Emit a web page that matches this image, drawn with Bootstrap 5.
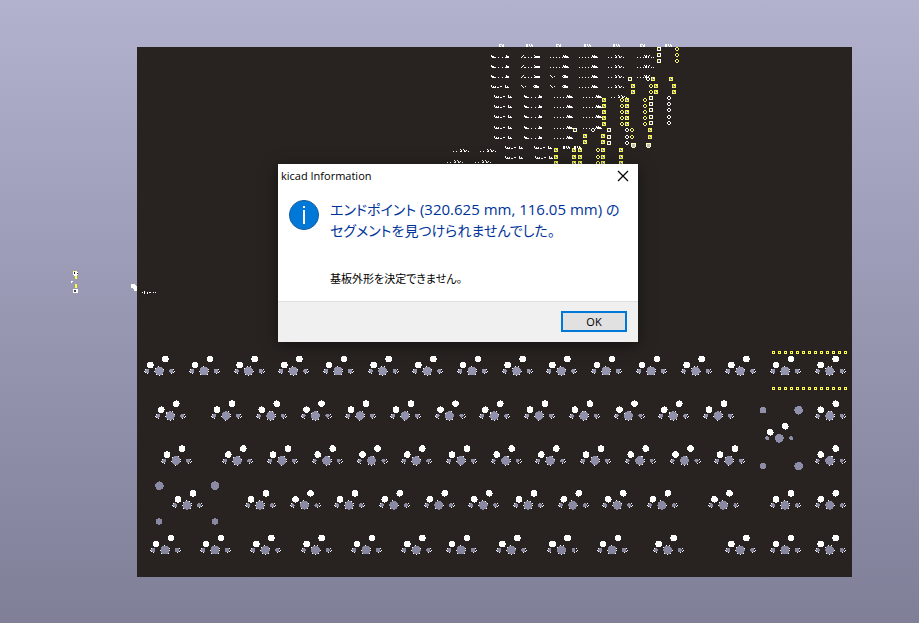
<!DOCTYPE html>
<html lang="ja">
<head>
<meta charset="utf-8">
<meta name="viewport" content="width=device-width, initial-scale=1">
<title>kicad Information</title>
<link href="https://cdn.jsdelivr.net/npm/bootstrap@5.3.0/dist/css/bootstrap.min.css" rel="stylesheet">
<style>
body { font-family: "Open Sans", "Noto Sans CJK JP", sans-serif; font-feature-settings: "palt"; }
.viewer { background: linear-gradient(#b2b1ce, #807f98); }
.info-window { left: 278px; top: 164px; width: 360px; font-size: 11px; line-height: 16px; box-shadow: 0 3px 14px rgba(0,0,0,.5); }
.title-row { height: 24px; padding-left: 3px; padding-right: 9px; }
.close-x { width: 12px; height: 12px; }
.message { padding: 11px 10px 14px; gap: 10px; }
.headline { font-size: 15px; line-height: 21px; color: #003399; }
.headline-kana { font-size: 14px; }
.detail { margin-top: 30px; }
.footer-row { background: #f0f0f0; border-color: #dfdfdf !important; padding: 9px 11px 10px; }
.ok-btn { width: 66px; height: 21px; background: #e1e1e1; border: 2px solid #0078d7; line-height: 16px; }
</style>
<script src="https://cdn.jsdelivr.net/npm/bootstrap@5.3.0/dist/js/bootstrap.bundle.min.js"></script>
</head>
<body>
<main class="viewer position-relative vh-100 overflow-hidden">
  <svg class="d-block w-100 h-100" viewBox="0 0 919 623" role="img" aria-label="PCB 3D view">
    <defs>
      <linearGradient id="sky" gradientUnits="userSpaceOnUse" x1="0" y1="0" x2="0" y2="623">
        <stop offset="0" stop-color="#b2b1ce"/><stop offset="1" stop-color="#807f98"/>
      </linearGradient>
    </defs>
    <rect x="137" y="47" width="715" height="530" fill="#282321"/>
    <g id="board" shape-rendering="crispEdges"></g>
    <g shape-rendering="crispEdges">
      <path d="M74 271h3v1h1v3h-1v1h-3v-1h-1v-3h1z" fill="#fff"/>
      <path d="M74 272h1v2h-1zM77 273h1v1h-1z" fill="#222"/>
      <path d="M73 271h2v1h-2zM75 276h2v3h-2zM75 284h2v4h-2z" fill="#ff3"/>
      <path d="M71 281h2v1h-1v1h-1z" fill="#fff"/>
      <path d="M73 289h5v4h-5z" fill="#fff"/>
      <path d="M74 290h2v2h-2z" fill="#444"/>
      <path d="M131 284h4v1h1v1h1v5h-3v-2h-1v-1h-2z" fill="#fff"/>
      <path d="M142 292h1v1h-1zM144 291h1v3h2v-2h1v2h-4zM149 292h2v1h-2zM153 292h1v1h-1zM155 292h1v1h-1z" fill="#fff"/>
    </g>
  </svg>

  <section class="info-window position-absolute bg-white text-black" role="dialog" aria-labelledby="dlg-title">
    <header class="title-row d-flex align-items-center justify-content-between">
      <span id="dlg-title">kicad Information</span>
      <button type="button" class="btn p-0 border-0 d-flex" aria-label="Close">
        <svg class="close-x" viewBox="0 0 12 12"><path d="M1 1l10 10M11 1L1 11" stroke="#000" stroke-width="1.2" fill="none"/></svg>
      </button>
    </header>
    <div class="message d-flex align-items-start">
      <svg width="32" height="32" viewBox="0 0 32 32" class="flex-shrink-0" aria-hidden="true">
        <circle cx="16" cy="16" r="14.600" fill="#0078d7" stroke="#1c5e9c"/>
        <path d="M15 7h2v2h-2zM15 11h2v14h-2z" fill="#fff"/>
      </svg>
      <div class="text-nowrap">
        <p class="headline mb-0"><span class="headline-kana">エンドポイント</span> (320.625 mm, 116.05 mm) <span class="headline-kana">の</span><br><span class="headline-kana">セグメントを見つけられませんでした。</span></p>
        <p class="detail mb-0">基板外形を決定できません。</p>
      </div>
    </div>
    <footer class="footer-row d-flex justify-content-end border-top">
      <button type="button" class="ok-btn p-0 text-black">OK</button>
    </footer>
  </section>
</main>
<script>
const board = document.getElementById('board');
function add(tag, attrs) {
  const el = document.createElementNS('http://www.w3.org/2000/svg', tag);
  for (const k in attrs) el.setAttribute(k, attrs[k]);
  board.appendChild(el);
}
const hole = (x, y, r) => add('circle', { cx: x, cy: y, r: r, fill: 'url(#sky)' });
const dot = (x, y) => add('circle', { cx: x, cy: y, r: 3.3, fill: '#fff' });
// White plating pixels around a side hole
const plating = (x, y, s) => {
  x = Math.round(x); y = Math.round(y);
  add('path', { d: `M${x - 2 * s} ${y - 2}h1v1h-1zM${x - 2 * s} ${y + 1}h1v1h-1zM${x} ${y + 2}h1v1h-1zM${x - 3 * s} ${y}h1v1h-1z`, fill: '#fff' });
};

// Key switch footprints: centre x of every switch in each row
const rows = [
  [371, [159.3,204,248.6,293.3,338,382.7,427.3,472,516.7,561.3,606,651,695.7,740.3,785,829.7]],
  [415.7, [170.3,226,270.7,315.5,360,405,449.5,494.3,539,583.8,628.5,673.3,718,829.7]],
  [438.3, [779.3]],
  [460.6, [176,237.3,282,326.7,371.5,416.3,461,505.7,550.3,595,639.7,684.5,729,829.7]],
  [505.3, [187,260,304.5,349,393.7,438.7,483.3,528,572.7,617.3,661.8,723.4,785,829.7]],
  [550, [165,215,265.3,315.6,366,416.3,461,511.3,561.5,612,667.7,740.3,785,829.7]]
];
for (const [y, xs] of rows) for (const x of xs) {
  hole(x - 12, y, 2.1);
  hole(x + 12, y, 2.1);
  if (xs.length > 1) {
    plating(x - 12, y, 1);
    plating(x + 12, y, -1);
    add('circle', { cx: x, cy: y, r: 4.5, fill: 'none', stroke: '#fff', 'stroke-width': 1, 'stroke-dasharray': '1 2.2' });
  }
  hole(x, y, 4.4);
  dot(x - 9, y - 6);
  dot(x + 6, y - 12);
}
// Stabiliser holes
[[763,410.3,3.2],[798.6,410.3,4.3],[763,466,3.2],[798.6,466.2,4.3],
 [159.4,485.7,4.3],[215,485.7,4.3],[159,521.5,3.2],[215,521.5,3.2]].forEach(h => hole(...h));

// Connector pads, square (s) or round (c), with ring colour
function pad(kind, x, y, colour) {
  x = Math.round(x); y = Math.round(y);
  if (kind === 's') {
    add('rect', { x: x - 2, y: y - 2, width: 4, height: 4, fill: colour });
    add('rect', { x: x - 1, y: y - 1, width: 2, height: 2, fill: colour === '#fff' ? '#3c383a' : '#77748a' });
    if (colour === '#fff') add('path', { d: `M${x - 2} ${y - 2}h1v2h-1zM${x + 1} ${y + 1}h1v1h-1z`, fill: '#ff4' });
    else add('path', { d: `M${x - 2} ${y + 1}h1v1h-1zM${x} ${y - 1}h1v1h-1z`, fill: '#fff' });
  } else {
    add('path', { d: `M${x-1} ${y-2}h2v1h-2zM${x-1} ${y+1}h2v1h-2zM${x-2} ${y-1}h1v2h-1zM${x+1} ${y-1}h1v2h-1z`, fill: colour });
    add('path', { d: `M${x-2} ${y-1}h1v1h-1zM${x} ${y+1}h1v1h-1z`, fill: '#fff' });
  }
}
const W = '#fff', Y = '#f4f43c';
const five = [99.7,105.7,112,118,124.3], fiveB = [97.7,103.7,110.3,116.7,123], low = [150.3,156.7,162.7];
[
  ['s',659,[49,55,61],W],['c',677,[49,55,61],Y],['s',630,[79],W],['c',648,[79],W],['s',653,[79],Y],['s',671,[79],Y],
  ['s',633,[86,92],Y],['c',651,[86,92],Y],['s',656,[86,92],Y],['s',674,[86,92],Y],
  ['s',604,five,Y],['c',622,five,Y],['s',627,five,Y],['c',645,five,Y],['s',651,fiveB,W],['c',669,fiveB,W],
  ['s',575,[130],W],['c',593,[130],W],['s',609,[130,137,143],W],['c',627,[130,137,143],W],
  ['c',632,[130,137],Y],['s',650,[130,137],Y],['s',585,[136,142],Y],['s',603,[136,142],Y],
  ['s',556,low,Y],['s',574,low,Y],['s',580,low,Y],['c',598,low,Y],['s',603,low,Y],['s',621,low,Y]
].forEach(([k, x, ys, c]) => ys.forEach(y => pad(k, x, y, c)));
[633.4, 648.4].forEach(x => add('circle', { cx: x, cy: 145.3, r: 2.2, fill: '#bbb', stroke: '#ffb', 'stroke-width': 1 }));

// Header strip pads
for (const y of [351, 387]) for (let i = 0; i < 13; i++)
  add('path', { d: `M${772 + 6 * i} ${y}h3v1h-2v1h1v1h-2zM${774 + 6 * i} ${y + 1}h1v2h-1z`, fill: '#ffff45' });

// Silkscreen marks as small bitmaps
const marks = {
  a: ['#..............#...','###............###.','.####..#...#..####.'],
  b: ['..#..........#.....','.#............#####','#..##..#..#..######'],
  c: ['.............#.#...','.............#####.','#..#..#..#..#.#####'],
  d: ['.......#..#........','........#..#.#.....','#..#...##..##..#...'],
  e: ['.......#.#..#......','........##.#.......','#..#..#.##.#..#.#..'],
  f: ['#............###...','.#..#.......#.####.','..#..........#####.'],
  g: ['#.............#....','#.#.#....##...#.#..','.####.##......####.'],
  h: ['##.#.#..','##.#.##.','##..#.#.'],
  i: ['.###.#','.#..##','.##.##']
};
function mark(key, x, y) {
  let d = '';
  marks[key].forEach((line, j) => [...line].forEach((c, i) => { if (c === '#') d += `M${x + i} ${y + j}h1v1h-1z`; }));
  add('path', { d, fill: '#fff' });
}
const cols = [491,521,550,579,608,637];
[[55,6,'abccde'],[65,6,'abccde'],[75,6,'abfcde'],[85,5,'gffcd']].forEach(([y, n, keys]) => {
  for (let i = 0; i < n; i++) mark(keys[i], cols[i], y);
});
[[95,5],[105,4],[115,4],[126,4],[136,3]].forEach(([y, n]) => {
  for (let i = 0; i < n; i++) mark('gaccd'[i], [494,524,554,583,611][i], y);
});
mark('g',505,146); mark('g',534,146); mark('h',563,146); mark('h',574,146);
mark('g',505,156); mark('g',535,156);
mark('d',453,149); mark('d',480,149); mark('d',447,160); mark('d',475,160);
[['i',498],['h',526],['i',555],['h',584],['h',613],['i',639],['h',665]].forEach(([k, x]) => mark(k, x, 44));
</script>
</body>
</html>
